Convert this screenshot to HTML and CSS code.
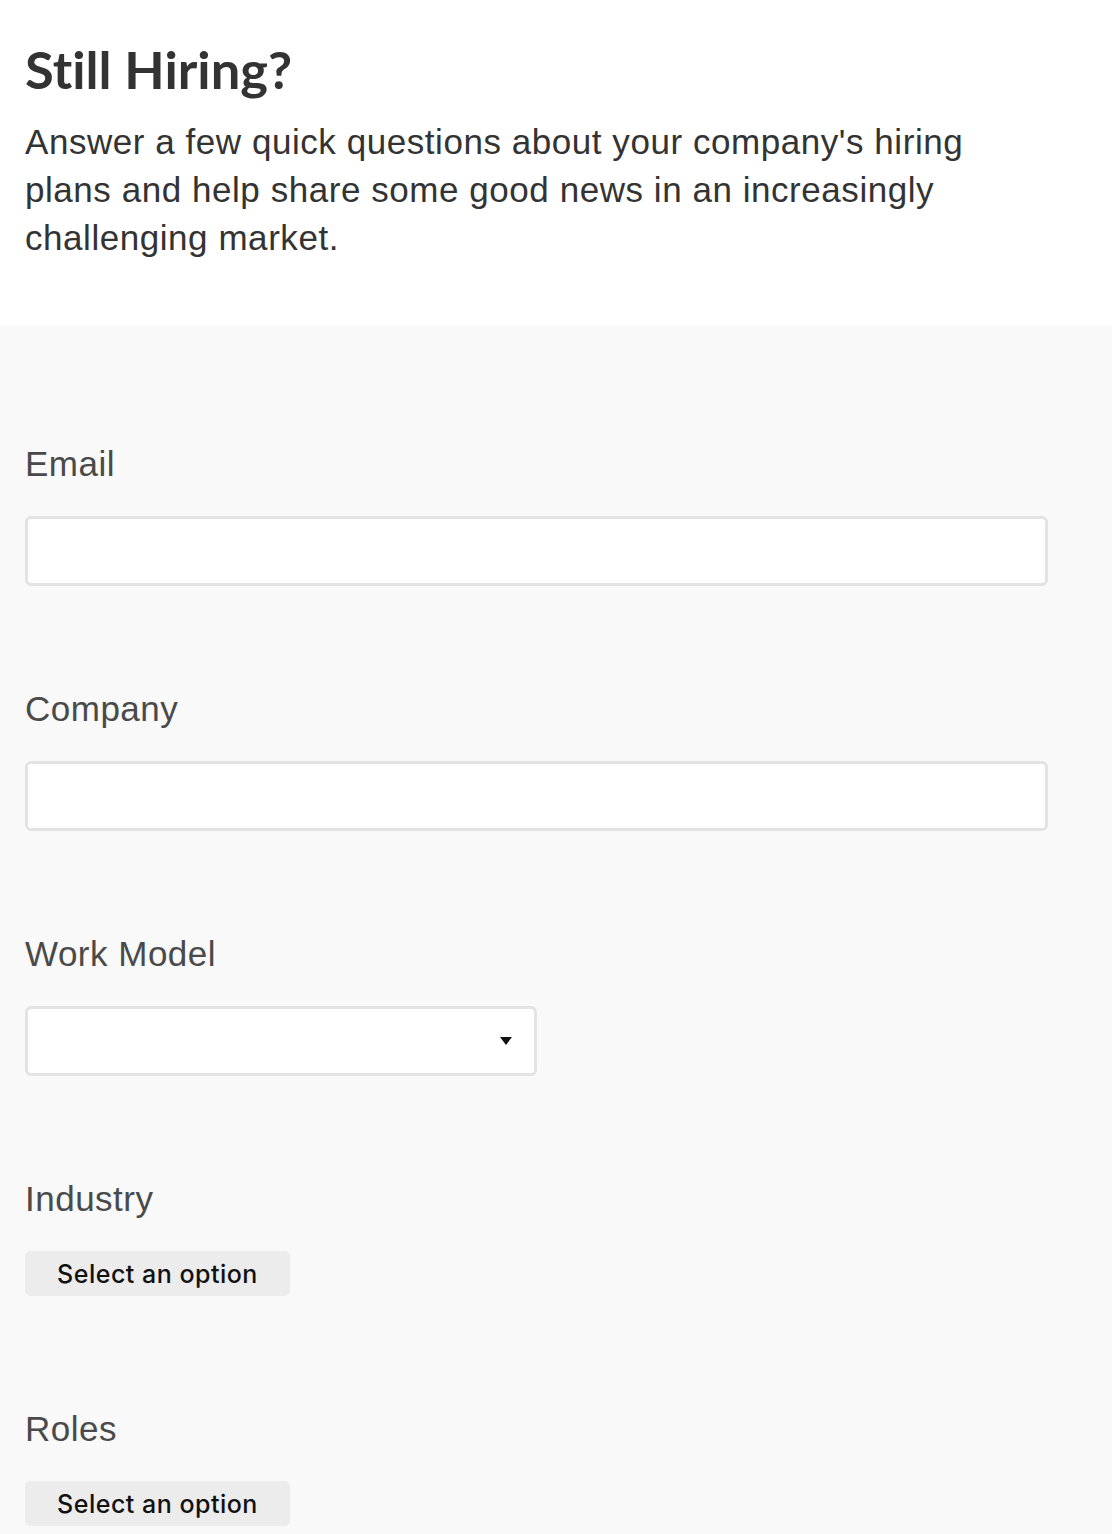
FILE: index.html
```html
<!DOCTYPE html>
<html lang="en">
<head>
<meta charset="utf-8">
<title>Still Hiring?</title>
<link rel="stylesheet" href="styles.css">
</head>
<body>
<header class="intro">
  <h1 class="title">Still Hiring?</h1>
  <p class="lead">Answer a few quick questions about your company's hiring plans and help share some good news in an increasingly challenging market.</p>
</header>
<main class="form">
  <div class="field">
    <label class="label">Email</label>
    <div class="input wide"></div>
  </div>
  <div class="field">
    <label class="label">Company</label>
    <div class="input wide"></div>
  </div>
  <div class="field">
    <label class="label">Work Model</label>
    <div class="input select">
      <svg class="caret" width="12" height="8" viewBox="0 0 12 8"><path d="M0 0H12L6 8Z" fill="#111"/></svg>
    </div>
  </div>
  <div class="field">
    <label class="label">Industry</label>
    <button class="option">Select an option</button>
  </div>
  <div class="field">
    <label class="label">Roles</label>
    <button class="option">Select an option</button>
  </div>
</main>
</body>
</html>
```
FILE: styles.css
```css
html, body {
  margin: 0;
  padding: 0;
}
body {
  font-family: "Liberation Sans", Arial, sans-serif;
  background: #f9f9f9;
  color: #333;
}
.intro {
  background: #fff;
  padding: 38px 25px 0;
  height: 288px;
}
.title {
  margin: 0;
  font-family: Lato, "Open Sans", sans-serif;
  font-weight: 700;
  font-size: 52.5px;
  line-height: 62px;
  color: #333;
  font-variant-ligatures: none;
}
.lead {
  margin: 18px 0 0;
  font-size: 35px;
  line-height: 48px;
  letter-spacing: 0.55px;
  color: #333;
  max-width: 990px;
}
.form {
  padding: 118px 25px 0;
  display: flex;
  flex-direction: column;
  gap: 103px;
}
.field {
  display: flex;
  flex-direction: column;
  align-items: flex-start;
}
.label {
  font-size: 35px;
  line-height: 40px;
  letter-spacing: 0.5px;
  color: #4a4a4a;
  margin-bottom: 32px;
}
.input {
  box-sizing: border-box;
  height: 70px;
  background: #fff;
  border: 3px solid #e3e3e3;
  border-radius: 6px;
}
.wide {
  width: 1023px;
}
.select {
  width: 512px;
  display: flex;
  align-items: center;
  justify-content: flex-end;
  padding-right: 22px;
}
.option {
  box-sizing: border-box;
  width: 265px;
  height: 45px;
  margin-bottom: 10px;
  border: none;
  border-radius: 5px;
  background: #ececec;
  font-family: Inter, "Liberation Sans", sans-serif;
  font-weight: 500;
  font-size: 25px;
  letter-spacing: 0.5px;
  color: #111;
  padding: 0;
}
```
